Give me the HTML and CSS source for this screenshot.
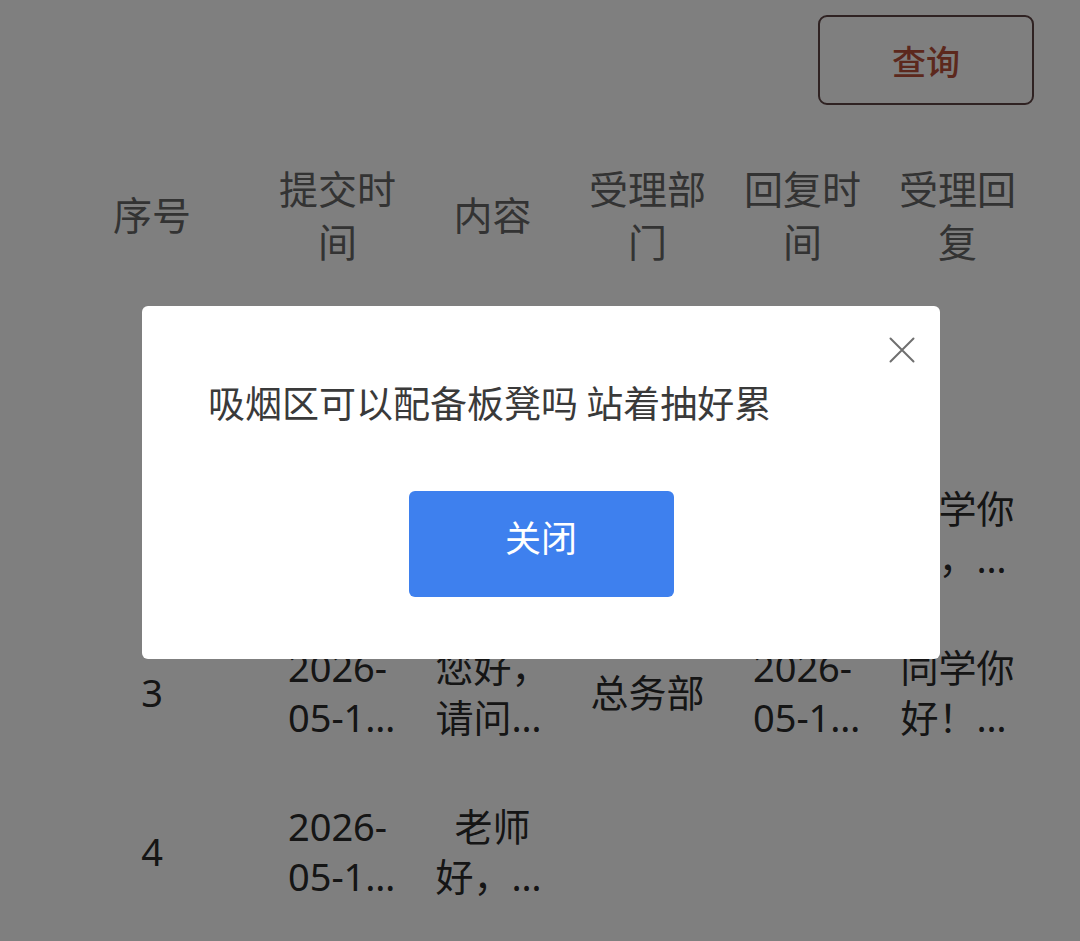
FILE: index.html
```html
<!DOCTYPE html>
<html lang="zh-CN">
<head>
<meta charset="utf-8">
<title>留言查询</title>
<link rel="stylesheet" href="styles.css">
</head>
<body>
<div class="page">
  <div class="toolbar">
    <button class="query-btn" type="button">查询</button>
  </div>
  <div class="table">
    <div class="row head">
      <div class="cell c1">序号</div>
      <div class="cell">提交时间</div>
      <div class="cell">内容</div>
      <div class="cell">受理部门</div>
      <div class="cell">回复时间</div>
      <div class="cell">受理回复</div>
    </div>
    <div class="row">
      <div class="cell c1">1</div>
      <div class="cell"><span class="clamp">2026-<wbr>05-18 09:12</span></div>
      <div class="cell"><span class="clamp">吸烟区可以配备板凳吗 站着抽好累</span></div>
      <div class="cell"></div>
      <div class="cell"></div>
      <div class="cell"></div>
    </div>
    <div class="row">
      <div class="cell c1">2</div>
      <div class="cell"><span class="clamp">2026-<wbr>05-16 14:30</span></div>
      <div class="cell"><span class="clamp">老师好，食堂的饭菜可以便宜一点吗</span></div>
      <div class="cell"><span class="clamp">总务部</span></div>
      <div class="cell"><span class="clamp">2026-<wbr>05-17 10:05</span></div>
      <div class="cell"><span class="clamp">同学你好，已经收到你的建议</span></div>
    </div>
    <div class="row">
      <div class="cell c1">3</div>
      <div class="cell"><span class="clamp">2026-<wbr>05-15 16:42</span></div>
      <div class="cell"><span class="clamp">您好，请问宿舍热水几点开始供应</span></div>
      <div class="cell"><span class="clamp">总务部</span></div>
      <div class="cell"><span class="clamp">2026-<wbr>05-16 08:20</span></div>
      <div class="cell"><span class="clamp">同学你好！热水每天早上供应</span></div>
    </div>
    <div class="row">
      <div class="cell c1">4</div>
      <div class="cell"><span class="clamp">2026-<wbr>05-14 11:08</span></div>
      <div class="cell"><span class="clamp">老师好，图书馆周末开放吗</span></div>
      <div class="cell"></div>
      <div class="cell"></div>
      <div class="cell"></div>
    </div>
  </div>
</div>

<div class="mask">
  <div class="dialog">
    <button class="dialog-close" type="button" aria-label="关闭">
      <svg viewBox="0 0 26 26" width="26" height="26"><path d="M1.5 1.5 L24.5 24.5 M24.5 1.5 L1.5 24.5" stroke="#6f6f6f" stroke-width="2" fill="none" stroke-linecap="round"/></svg>
    </button>
    <p class="dialog-text">吸烟区可以配备板凳吗 站着抽好累</p>
    <button class="dialog-btn" type="button">关闭</button>
  </div>
</div>
</body>
</html>
```

FILE: styles.css
```css
* { box-sizing: border-box; }

html, body {
  margin: 0;
  padding: 0;
  background: #ffffff;
  font-family: "Noto Sans", "Noto Sans CJK SC", sans-serif;
}

.page {
  width: 1080px;
  height: 941px;
  overflow: hidden;
}

.toolbar {
  display: flex;
  justify-content: flex-end;
  padding: 15px 46px 0 0;
}

.query-btn {
  width: 216px;
  height: 90px;
  border: 2px solid #5e4444;
  border-radius: 9px;
  background: #ffffff;
  color: #b8503a;
  font-family: "Noto Sans CJK SC", sans-serif;
  font-size: 34px;
  font-weight: 500;
  padding: 0;
}

.table {
  margin-top: 30px;
  padding-left: 44px;
}

.row {
  display: grid;
  grid-template-columns: 216px repeat(5, 155px);
  height: 159px;
  align-items: center;
}

.cell {
  font-size: 38px;
  line-height: 50px;
  color: #2a2a2a;
  text-align: center;
  display: flex;
  justify-content: center;
}

.head .cell {
  color: #666666;
  font-size: 39px;
  line-height: 53px;
  width: 120px;
  justify-self: center;
}

.head .cell.c1 {
  width: auto;
}

.clamp {
  display: -webkit-box;
  -webkit-box-orient: vertical;
  -webkit-line-clamp: 2;
  overflow: hidden;
  width: 118px;
  text-align: center;
}

.mask {
  position: fixed;
  inset: 0;
  background: rgba(0, 0, 0, 0.5);
}

.dialog {
  position: absolute;
  left: 142px;
  top: 306px;
  width: 798px;
  height: 353px;
  background: #ffffff;
  border-radius: 6px;
  padding: 72px 66px 62px;
  display: flex;
  flex-direction: column;
  align-items: center;
}

.dialog-close {
  position: absolute;
  top: 31px;
  right: 25px;
  width: 26px;
  height: 26px;
  padding: 0;
  border: 0;
  background: none;
  display: flex;
}

.dialog-text {
  align-self: stretch;
  margin: 0;
  font-family: "Noto Sans CJK SC", sans-serif;
  font-size: 37px;
  line-height: 48px;
  color: #3a3a3a;
  white-space: nowrap;
}

.dialog-btn {
  margin-top: 65px;
  width: 265px;
  height: 106px;
  border: 0;
  border-radius: 6px;
  background: #3e80ee;
  color: #ffffff;
  font-family: "Noto Sans CJK SC", sans-serif;
  font-size: 36px;
  padding: 0 0 16px;
}
```
